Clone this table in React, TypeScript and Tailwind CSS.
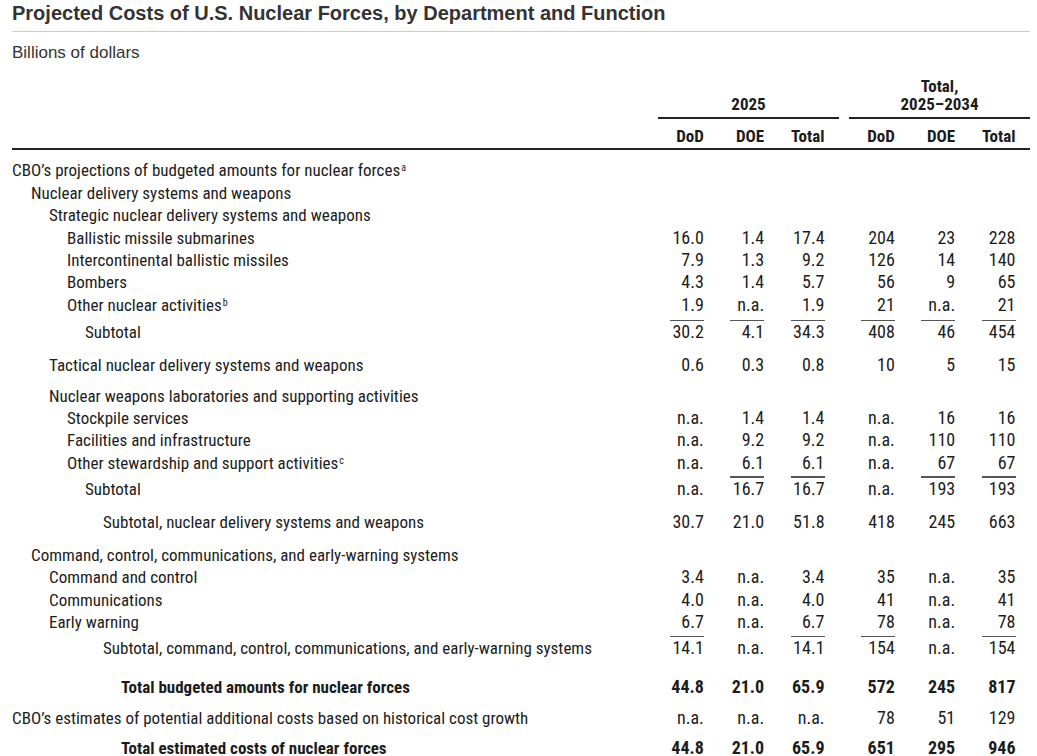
import React from "react";

type Row = {
  label: string;
  sup?: string;
  level: number;
  mt: string;
  values?: string[];
  lines?: boolean[];
  bold?: boolean;
};

const indent: Record<number, string> = {
  0: "pl-0",
  1: "pl-[19px]",
  2: "pl-[37px]",
  3: "pl-[55px]",
  4: "pl-[73px]",
  5: "pl-[91px]",
  6: "pl-[109px]",
};

const rows: Row[] = [
  { label: "CBO\u2019s projections of budgeted amounts for nuclear forces", sup: "a", level: 0, mt: "mt-[9px]" },
  { label: "Nuclear delivery systems and weapons", level: 1, mt: "mt-[0.5px]" },
  { label: "Strategic nuclear delivery systems and weapons", level: 2, mt: "mt-0" },
  { label: "Ballistic missile submarines", level: 3, mt: "mt-[0.5px]", values: ["16.0", "1.4", "17.4", "204", "23", "228"] },
  { label: "Intercontinental ballistic missiles", level: 3, mt: "mt-0", values: ["7.9", "1.3", "9.2", "126", "14", "140"] },
  { label: "Bombers", level: 3, mt: "mt-0", values: ["4.3", "1.4", "5.7", "56", "9", "65"] },
  { label: "Other nuclear activities", sup: "b", level: 3, mt: "mt-0", values: ["1.9", "n.a.", "1.9", "21", "n.a.", "21"] },
  { label: "Subtotal", level: 4, mt: "mt-[3.5px]", values: ["30.2", "4.1", "34.3", "408", "46", "454"], lines: [true, true, true, true, true, true] },
  { label: "Tactical nuclear delivery systems and weapons", level: 2, mt: "mt-[10.5px]", values: ["0.6", "0.3", "0.8", "10", "5", "15"] },
  { label: "Nuclear weapons laboratories and supporting activities", level: 2, mt: "mt-[8.5px]" },
  { label: "Stockpile services", level: 3, mt: "mt-0", values: ["n.a.", "1.4", "1.4", "n.a.", "16", "16"] },
  { label: "Facilities and infrastructure", level: 3, mt: "mt-0", values: ["n.a.", "9.2", "9.2", "n.a.", "110", "110"] },
  { label: "Other stewardship and support activities", sup: "c", level: 3, mt: "mt-0", values: ["n.a.", "6.1", "6.1", "n.a.", "67", "67"] },
  { label: "Subtotal", level: 4, mt: "mt-[2.5px]", values: ["n.a.", "16.7", "16.7", "n.a.", "193", "193"], lines: [false, true, true, false, true, true] },
  { label: "Subtotal, nuclear delivery systems and weapons", level: 5, mt: "mt-[10.5px]", values: ["30.7", "21.0", "51.8", "418", "245", "663"] },
  { label: "Command, control, communications, and early-warning systems", level: 1, mt: "mt-[11px]" },
  { label: "Command and control", level: 2, mt: "mt-0", values: ["3.4", "n.a.", "3.4", "35", "n.a.", "35"] },
  { label: "Communications", level: 2, mt: "mt-0", values: ["4.0", "n.a.", "4.0", "41", "n.a.", "41"] },
  { label: "Early warning", level: 2, mt: "mt-[0.5px]", values: ["6.7", "n.a.", "6.7", "78", "n.a.", "78"] },
  { label: "Subtotal, command, control, communications, and early-warning systems", level: 5, mt: "mt-[2px]", values: ["14.1", "n.a.", "14.1", "154", "n.a.", "154"], lines: [true, false, true, true, false, true] },
  { label: "Total budgeted amounts for nuclear forces", level: 6, mt: "mt-[17px]", values: ["44.8", "21.0", "65.9", "572", "245", "817"], bold: true },
  { label: "CBO\u2019s estimates of potential additional costs based on historical cost growth", level: 0, mt: "mt-[8.5px]", values: ["n.a.", "n.a.", "n.a.", "78", "51", "129"] },
  { label: "Total estimated costs of nuclear forces", level: 6, mt: "mt-[7.5px]", values: ["44.8", "21.0", "65.9", "651", "295", "946"], bold: true },
];

const gridCols = "grid grid-cols-[1fr_60.33px_60.33px_60.33px_10px_60.33px_60.33px_60.33px]";

function ValueCell({ v, line, hasLines, bold }: { v?: string; line?: boolean; hasLines: boolean; bold?: boolean }) {
  return (
    <div className={`flex flex-col items-end pr-[14.5px] text-[18px] ${bold ? "font-bold" : ""}`}>
      {hasLines && <div className={`h-[1.5px] w-[34px] ${line ? "bg-[#555]" : "bg-transparent"}`} />}
      <div className="h-[22.3px] leading-[22.3px] whitespace-nowrap">{v ?? ""}</div>
    </div>
  );
}

function TableRow({ row }: { row: Row }) {
  const hasLines = !!row.lines;
  const v = row.values ?? [];
  return (
    <div className={`${gridCols} ${row.mt}`}>
      <div
        className={`${indent[row.level]} ${hasLines ? "pt-[1.5px]" : ""} text-[17px] whitespace-nowrap ${row.bold ? "font-bold" : ""}`}
      >
        <div className="h-[22.3px] leading-[22.3px]">
          {row.label}
          {row.sup && <sup className="text-[10px] ml-[1px]">{row.sup}</sup>}
        </div>
      </div>
      {[0, 1, 2].map((i) => (
        <ValueCell key={i} v={v[i]} line={row.lines?.[i]} hasLines={hasLines} bold={row.bold} />
      ))}
      <div />
      {[3, 4, 5].map((i) => (
        <ValueCell key={i} v={v[i]} line={row.lines?.[i]} hasLines={hasLines} bold={row.bold} />
      ))}
    </div>
  );
}

export default function App() {
  return (
    <div className="w-[1037px] h-[756px] overflow-hidden bg-white pl-[12px] pr-[7px]">
      <div
        className="pt-[1px] pb-[6px] border-b border-[#cccccc] text-[20px] leading-[24px] font-bold text-[#333333]"
        style={{ fontFamily: '"Liberation Sans", Arial, sans-serif' }}
      >
        Projected Costs of U.S. Nuclear Forces, by Department and Function
      </div>
      <div
        className="mt-[10.5px] text-[17px] leading-[20px] text-[#333333]"
        style={{ fontFamily: '"Liberation Sans", Arial, sans-serif' }}
      >
        Billions of dollars
      </div>

      <div
        className="mt-[14.5px] text-[#1c1c1c]"
        style={{ fontFamily: '"Liberation Sans Narrow", "Arial Narrow", "Roboto Condensed", "DejaVu Sans Condensed", sans-serif' }}
      >
        {/* group headers */}
        <div className={`${gridCols} text-[17px]`}>
          <div />
          <div className="col-span-3 flex items-end justify-center pb-[4px] border-b-2 border-[#222] font-bold leading-[18px]">
            2025
          </div>
          <div />
          <div className="col-span-3 flex flex-col items-center justify-end pb-[4px] border-b-2 border-[#222] font-bold leading-[18px]">
            <div className="leading-[18px]">Total,</div>
            <div className="leading-[18px]">2025–2034</div>
          </div>
        </div>
        {/* column headers */}
        <div className={`${gridCols} border-b-2 border-[#222] font-bold text-[17px]`}>
          <div />
          {["DoD", "DOE", "Total"].map((h) => (
            <div key={h} className="pt-[6px] pb-[1px] pr-[14.5px] text-right h-[29px] leading-[22px]">
              {h}
            </div>
          ))}
          <div />
          {["DoD", "DOE", "Total"].map((h) => (
            <div key={"b" + h} className="pt-[6px] pb-[1px] pr-[14.5px] text-right h-[29px] leading-[22px]">
              {h}
            </div>
          ))}
        </div>

        {rows.map((r, i) => (
          <TableRow key={i} row={r} />
        ))}
      </div>
    </div>
  );
}
